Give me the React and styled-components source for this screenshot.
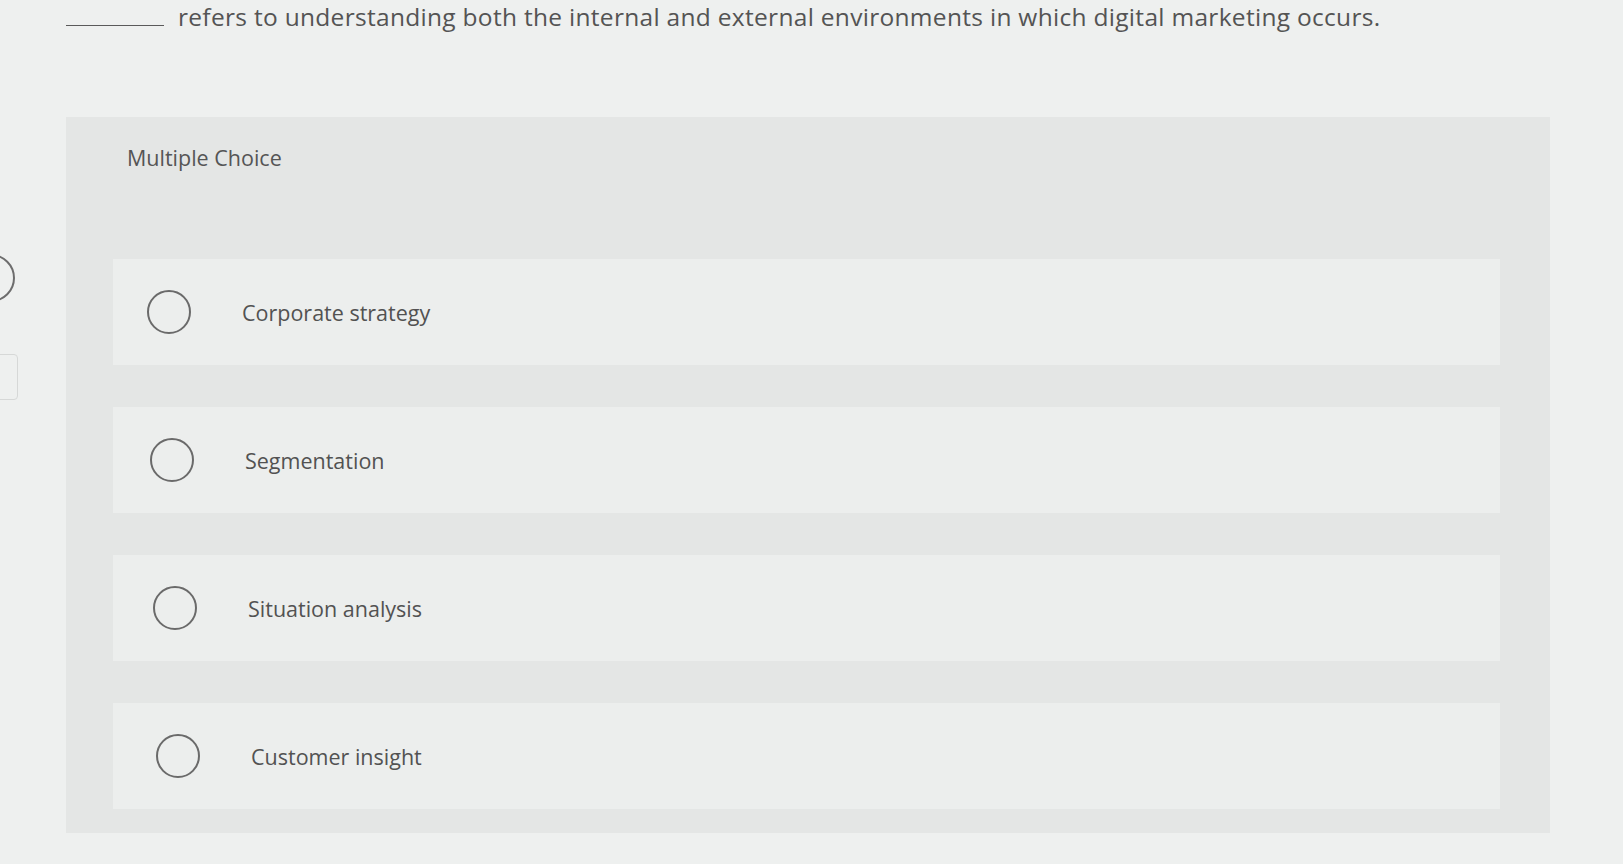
import React from 'react'
import styled, { createGlobalStyle } from 'styled-components';

const GlobalStyle = createGlobalStyle`
    html, body {
        margin: 0;
        padding: 0;
        background: #eef0ef;
    }
    body {
        font-family: "Open Sans", Lato, Arial, sans-serif;
        color: #4f4f4f;
    }
`

const Page = styled.div`
    width: 1623px;
    height: 864px;
    display: flex;
    flex-direction: row;
    overflow: hidden;
    background: #eef0ef;
`

const Rail = styled.div`
    width: 18px;
    display: flex;
    flex-direction: column;
    padding-top: 254px;
    gap: 52px;
    overflow: hidden;
`

const RailCircle = styled.div`
    width: 44px;
    height: 44px;
    margin-left: -33px;
    border: 2px solid #6d6d6d;
    border-radius: 50%;
`

const RailBox = styled.div`
    width: 40px;
    height: 44px;
    margin-left: -24px;
    border: 1px solid #d6d8d7;
    border-radius: 4px;
`

const Main = styled.div`
    flex: 1;
    display: flex;
    flex-direction: column;
    padding-left: 48px;
`

const Question = styled.div`
    display: flex;
    flex-direction: row;
    align-items: flex-end;
    height: 34px;
    font-size: 24.5px;
    line-height: 34px;
    letter-spacing: 0.3px;
    color: #545454;
    white-space: nowrap;
`

const Blank = styled.span`
    display: inline-block;
    width: 98px;
    border-bottom: 1.5px solid #5a5a5a;
    margin-right: 14px;
    margin-bottom: 8px;
`

const Panel = styled.div`
    width: 1484px;
    margin-top: 83px;
    background: #e4e6e5;
    display: flex;
    flex-direction: column;
    padding: 28px 50px 24px 47px;
    box-sizing: border-box;
`

const Heading = styled.div`
    font-size: 21.5px;
    line-height: 26px;
    color: #555;
    padding-left: 14px;
    margin-bottom: 88px;
`

const Options = styled.div`
    display: flex;
    flex-direction: column;
    gap: 42px;
`

const Option = styled.label`
    height: 106px;
    background: #eceeed;
    display: flex;
    flex-direction: row;
    align-items: center;
    padding-left: ${p => p.$indent}px;
    cursor: pointer;
`

const Radio = styled.span`
    width: 44px;
    height: 44px;
    border: 2px solid #6a6a6a;
    border-radius: 50%;
    box-sizing: border-box;
    flex-shrink: 0;
`

const Label = styled.span`
    margin-left: 51px;
    font-size: 21.5px;
    color: #525252;
`

const choices = [
    'Corporate strategy',
    'Segmentation',
    'Situation analysis',
    'Customer insight',
]

const App = () => {
    return (
        <>
        <GlobalStyle />
        <Page>
            <Rail>
                <RailCircle />
                <RailBox />
            </Rail>
            <Main>
                <Question>
                    <Blank />
                    refers to understanding both the internal and external environments in which digital marketing occurs.
                </Question>
                <Panel>
                    <Heading>Multiple Choice</Heading>
                    <Options>
                        {choices.map((c, i) => (
                            <Option key={c} $indent={34 + i * 3}>
                                <Radio />
                                <Label>{c}</Label>
                            </Option>
                        ))}
                    </Options>
                </Panel>
            </Main>
        </Page>
        </>
    )
}

export default App;
